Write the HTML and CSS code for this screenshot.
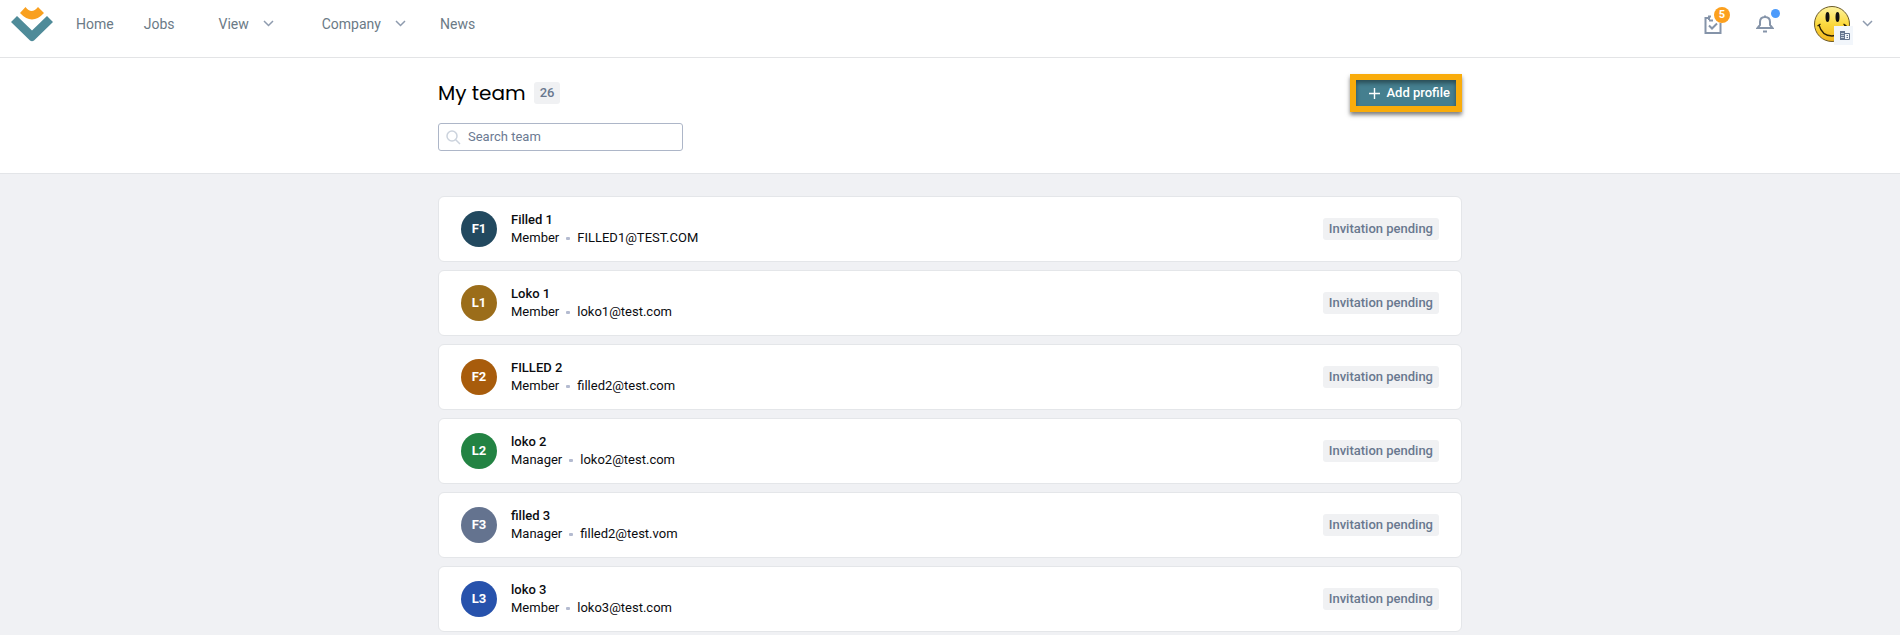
FILE: index.html
```html
<!DOCTYPE html>
<html lang="en">
<head>
    <meta charset="UTF-8">
    <meta name="viewport" content="width=device-width, initial-scale=1.0">
    <title>My team</title>
    <link rel="stylesheet" href="styles.css">
</head>
<body>
    <header class="topbar">
        <a href="#" class="logo" aria-label="Home page">
            <svg width="44" height="36" viewBox="0 0 44 36">
                <path d="M10 7 L15.500 1 Q21.500 9 28 1 L34 7 Q22 20 10 7 Z" fill="#f9a01f"/>
                <path d="M7 10 L1 16 L20 34.500 Q22 36 24 34.500 L43 16 L37 10 L22 24.500 Z" fill="#4f8b99"/>
            </svg>
        </a>
        <nav class="nav">
            <a href="#">Home</a>
            <a href="#">Jobs</a>
            <button type="button" class="nav-menu">View
                <svg class="chevron" width="11" height="7" viewBox="0 0 11 7"><path d="M1 1 L5.500 5.500 L10 1"/></svg>
            </button>
            <button type="button" class="nav-menu">Company
                <svg class="chevron" width="11" height="7" viewBox="0 0 11 7"><path d="M1 1 L5.500 5.500 L10 1"/></svg>
            </button>
            <a href="#">News</a>
        </nav>
        <div class="actions">
            <button type="button" class="icon-btn" aria-label="Tasks">
                <svg class="line-icon" width="18" height="22" viewBox="0 0 18 22">
                    <path d="M5 5 H1.500 V20 H16.500 V10 M5 7 V3.500 H7 M5 7.500 H9 M5 12.500 L8 15.500 L13 10.500"/>
                </svg>
                <span class="count">5</span>
            </button>
            <button type="button" class="icon-btn" aria-label="Notifications">
                <svg class="line-icon" width="18" height="18" viewBox="0 0 18 18">
                    <path d="M9 0.500 V2 M1.500 13 H16.500 L14 10 V7 Q14 2 9 2 Q4 2 4 7 V10 Z M7 16.500 H11"/>
                </svg>
                <span class="dot"></span>
            </button>
            <button type="button" class="profile" aria-label="Profile">
                <span class="smiley">
                    <svg width="36" height="36" viewBox="0 0 36 36">
                        <defs>
                            <linearGradient id="face" x1="0" y1="0" x2="0" y2="1">
                                <stop offset="0" stop-color="#fdf3a0"/>
                                <stop offset="0.5" stop-color="#fbd93f"/>
                                <stop offset="1" stop-color="#f2b41c"/>
                            </linearGradient>
                        </defs>
                        <circle cx="18" cy="18" r="17.500" fill="url(#face)" stroke="#6b5a2a"/>
                        <ellipse cx="13.500" cy="11" rx="2" ry="5" fill="#111"/>
                        <ellipse cx="23.500" cy="11" rx="2" ry="5" fill="#111"/>
                        <path d="M5 19 Q8 30 18 30 Q28 30 31 19 M3.500 20 L6.500 18 M29.500 18 L32.500 20" fill="none" stroke="#2b2106" stroke-width="1.300"/>
                    </svg>
                    <span class="company-tag">
                        <svg width="10" height="9" viewBox="0 0 10 9">
                            <path d="M0 0 H5 V9 H0 Z" fill="#64758f"/>
                            <path d="M1 2.500 H4 M1 4.500 H4 M1 6.500 H4" stroke="#c3cddb"/>
                            <path d="M5 2.500 H9.500 V8.500 H5 M6.500 4.500 H8 M6.500 6.500 H8" fill="none" stroke="#64758f"/>
                        </svg>
                    </span>
                </span>
                <svg class="chevron" width="11" height="7" viewBox="0 0 11 7"><path d="M1 1 L5.500 5.500 L10 1"/></svg>
            </button>
        </div>
    </header>

    <section class="page-head">
        <div class="container">
            <div class="title-row">
                <h1>My team</h1>
                <span class="tag">26</span>
                <button type="button" class="add-btn">
                    <svg width="11" height="11" viewBox="0 0 11 11"><path d="M5.500 0 V11 M0 5.500 H11"/></svg>
                    Add profile
                </button>
            </div>
            <label class="search">
                <svg width="15" height="15" viewBox="0 0 15 15"><circle cx="6" cy="6" r="5"/><path d="M9.500 9.500 L14 14"/></svg>
                <input type="text" placeholder="Search team" aria-label="Search team">
            </label>
        </div>
    </section>

    <main class="container">
        <ul class="team">
            <li class="card">
                <span class="avatar navy">F1</span>
                <div class="info">
                    <div class="name">Filled 1</div>
                    <div class="meta"><span>Member</span><span>FILLED1@TEST.COM</span></div>
                </div>
                <span class="tag">Invitation pending</span>
            </li>
            <li class="card">
                <span class="avatar gold">L1</span>
                <div class="info">
                    <div class="name">Loko 1</div>
                    <div class="meta"><span>Member</span><span>loko1@test.com</span></div>
                </div>
                <span class="tag">Invitation pending</span>
            </li>
            <li class="card">
                <span class="avatar orange">F2</span>
                <div class="info">
                    <div class="name">FILLED 2</div>
                    <div class="meta"><span>Member</span><span>filled2@test.com</span></div>
                </div>
                <span class="tag">Invitation pending</span>
            </li>
            <li class="card">
                <span class="avatar green">L2</span>
                <div class="info">
                    <div class="name">loko 2</div>
                    <div class="meta"><span>Manager</span><span>loko2@test.com</span></div>
                </div>
                <span class="tag">Invitation pending</span>
            </li>
            <li class="card">
                <span class="avatar slate">F3</span>
                <div class="info">
                    <div class="name">filled 3</div>
                    <div class="meta"><span>Manager</span><span>filled2@test.vom</span></div>
                </div>
                <span class="tag">Invitation pending</span>
            </li>
            <li class="card">
                <span class="avatar blue">L3</span>
                <div class="info">
                    <div class="name">loko 3</div>
                    <div class="meta"><span>Member</span><span>loko3@test.com</span></div>
                </div>
                <span class="tag">Invitation pending</span>
            </li>
        </ul>
    </main>
</body>
</html>
```
FILE: styles.css
```css
* {
    box-sizing: border-box;
}

body {
    margin: 0;
    font-family: Roboto, sans-serif;
    font-size: 13px;
    line-height: 18px;
    color: #0b0c10;
    background-color: #f0f1f4;
}

button {
    font: inherit;
    color: inherit;
    padding: 0;
    border: 0;
    background: none;
    cursor: pointer;
}

svg {
    display: block;
}

/* Top bar */
.topbar {
    display: flex;
    align-items: center;
    height: 58px;
    padding: 0 27px 10px 10px;
    background: #fff;
    border-bottom: 1px solid #e3e4e6;
}

.nav {
    display: flex;
    align-items: center;
    gap: 30px;
    margin-left: 22px;
    font-size: 14px;
    color: #6b7a86;
}

.nav a {
    color: inherit;
    text-decoration: none;
}

.nav-menu {
    display: flex;
    align-items: center;
    gap: 14px;
    padding: 0 4px 0 14px;
}

.chevron path {
    fill: none;
    stroke: #8e9bae;
    stroke-width: 1.5;
}

.actions {
    display: flex;
    align-items: center;
    gap: 34px;
    margin-left: auto;
}

.icon-btn {
    position: relative;
}

.line-icon path {
    fill: none;
    stroke: #8594a9;
    stroke-width: 2;
}

.count {
    position: absolute;
    top: -6px;
    right: -8px;
    width: 16px;
    height: 16px;
    border-radius: 50%;
    background: #fca01e;
    color: #fff;
    font-size: 11px;
    font-weight: 700;
    line-height: 16px;
}

.dot {
    position: absolute;
    top: -6px;
    right: -6px;
    width: 9px;
    height: 9px;
    border-radius: 50%;
    background: #4d9bfb;
}

.profile {
    display: flex;
    align-items: center;
    gap: 12px;
    margin-left: 6px;
}

.smiley {
    position: relative;
}

.company-tag {
    position: absolute;
    right: -3px;
    bottom: -3px;
    padding: 5px 3px 5px 6px;
    background: #f2f6fb;
}

/* Page heading */
.container {
    max-width: 1024px;
    margin: 0 auto;
}

.page-head {
    padding: 16px 0 22px;
    background: #fff;
    border-bottom: 1px solid #e3e5e8;
}

.title-row {
    display: flex;
    align-items: center;
    gap: 8px;
}

h1 {
    margin: 0;
    font-family: Poppins, Inter, sans-serif;
    font-size: 20px;
    font-weight: 400;
    line-height: 28px;
    color: #000;
}

.tag {
    padding: 2px 6px;
    border-radius: 3px;
    background: #f0f1f3;
    color: #69788f;
    font-weight: 500;
}

.add-btn {
    display: flex;
    align-items: center;
    gap: 7px;
    height: 38px;
    margin-left: auto;
    padding: 0 6px 0 13px;
    border: 6px solid #f9ac0b;
    background: #457f8f;
    box-shadow: 0 3px 4px rgba(0, 0, 0, 0.5), inset 0 3px 4px rgba(0, 0, 0, 0.4);
    color: #fff;
    font-weight: 500;
}

.add-btn path {
    stroke: #fff;
    stroke-width: 1.4;
}

.search {
    display: flex;
    align-items: center;
    gap: 7px;
    width: 245px;
    height: 28px;
    margin-top: 11px;
    padding: 0 7px;
    border: 1px solid #adb6c8;
    border-radius: 3px;
}

.search svg {
    fill: none;
    stroke: #ccd3dd;
    stroke-width: 1.5;
}

.search input {
    flex: 1;
    min-width: 0;
    padding: 0;
    border: 0;
    outline: none;
    background: none;
    font: inherit;
}

.search input::placeholder {
    color: #6b7a92;
    opacity: 1;
}

/* Team list */
.team {
    display: flex;
    flex-direction: column;
    gap: 8px;
    margin: 0;
    padding: 22px 0 4px;
    list-style: none;
}

.card {
    display: flex;
    align-items: center;
    justify-content: space-between;
    padding: 14px 22px;
    border: 1px solid #e4e6e9;
    border-radius: 6px;
    background: #fff;
}

.avatar {
    width: 36px;
    height: 36px;
    margin-right: 14px;
    border-radius: 50%;
    color: #fff;
    font-weight: 700;
    line-height: 36px;
    text-align: center;
}

.navy { background: #22495f; }
.gold { background: #9b6d1a; }
.orange { background: #a85c0c; }
.green { background: #238343; }
.slate { background: #64738f; }
.blue { background: #2752ac; }

.info {
    flex: 1;
}

.name {
    font-weight: 500;
}

.meta {
    display: flex;
    align-items: center;
}

.meta span + span::before {
    content: "";
    display: inline-block;
    width: 4px;
    height: 3px;
    margin: 0 7px;
    border-radius: 1px;
    background: #b4bbd0;
    vertical-align: middle;
}
```
